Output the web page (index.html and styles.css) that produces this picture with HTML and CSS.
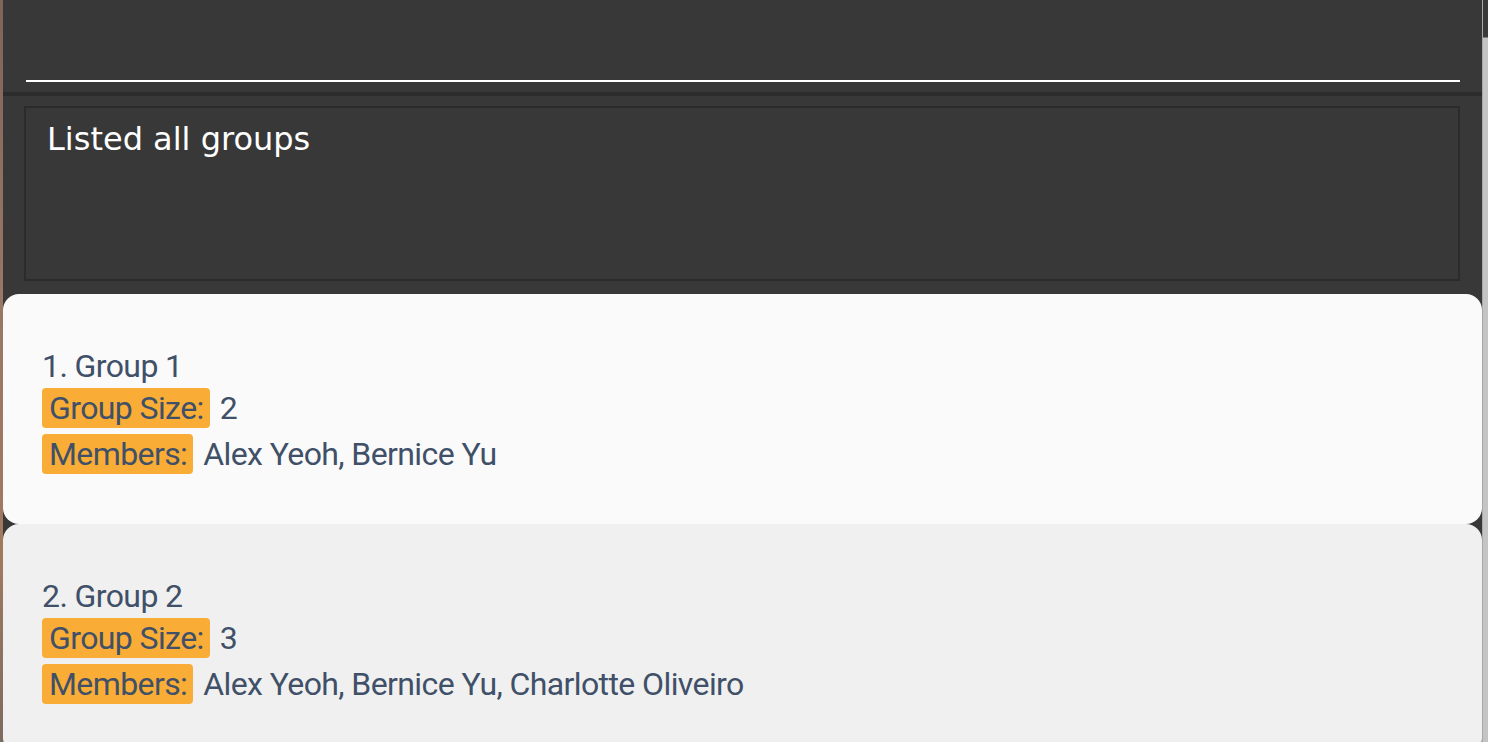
FILE: index.html
```html
<!DOCTYPE html>
<html>
<head>
<meta charset="utf-8">
<link rel="stylesheet" href="styles.css">
</head>
<body>
<div class="window">
  <div class="edge-left"></div>
  <div class="main">
    <div class="command">
      <div class="command-line"></div>
    </div>
    <div class="separator"></div>
    <div class="result-area">
      <div class="result-box">Listed all groups</div>
    </div>
    <div class="list">
      <div class="card card-odd">
        <div class="title">1. Group 1</div>
        <div class="row"><span class="badge">Group Size:</span><span class="value">2</span></div>
        <div class="row"><span class="badge">Members:</span><span class="value">Alex Yeoh, Bernice Yu</span></div>
      </div>
      <div class="card card-even">
        <div class="title">2. Group 2</div>
        <div class="row"><span class="badge">Group Size:</span><span class="value">3</span></div>
        <div class="row"><span class="badge">Members:</span><span class="value">Alex Yeoh, Bernice Yu, Charlotte Oliveiro</span></div>
      </div>
    </div>
  </div>
  <div class="edge-right"></div>
</div>
</body>
</html>
```

FILE: styles.css
```css
html, body {
  margin: 0;
  padding: 0;
  background: #383838;
  overflow: hidden;
}
.window {
  display: flex;
  width: 1488px;
  height: 742px;
  overflow: hidden;
}
.edge-left {
  width: 3px;
  flex: none;
  background: linear-gradient(to bottom, #7f6458 0%, #9a7766 40%, #a07a5e 75%, #7d6a60 100%);
}
.edge-right {
  width: 6px;
  flex: none;
  background: linear-gradient(to bottom, #3a3a3a 0px, #3a3a3a 37px, #c4c4c4 38px, #c4c4c4 100%);
  border-left: 1px solid #a8a8a8;
  box-sizing: border-box;
}
.main {
  flex: 1;
  display: flex;
  flex-direction: column;
  background: #383838;
  min-width: 0;
}
.main > * {
  flex: none;
}
.command {
  height: 92px;
  padding: 80px 22px 0 23px;
  box-sizing: border-box;
}
.command-line {
  height: 2px;
  background: #ffffff;
}
.separator {
  height: 4px;
  background: #2c2c2c;
}
.result-area {
  padding: 10px 22px 13px 21px;
}
.result-box {
  border: 2px solid #2b2b2b;
  padding: 13px 20px 0 21px;
  font-family: "DejaVu Sans", sans-serif;
  font-size: 32px;
  color: #ffffff;
  line-height: 37px;
  height: 158px;
}
.list {
  display: flex;
  flex-direction: column;
}
.card {
  flex: none;
  border-radius: 16px;
  padding: 51px 20px 50px 39px;
  font-family: Roboto, sans-serif;
  font-size: 32px;
  color: #3f5068;
  letter-spacing: -0.6px;
}
.card-odd { background: #fafafa; }
.card-even { background: #f0f0f0; }
.title {
  line-height: 43px;
  height: 43px;
}
.row {
  display: flex;
  align-items: center;
  height: 40px;
  margin-bottom: 6px;
}
.row:last-child { margin-bottom: 0; }
.badge {
  background: #f9ad36;
  border-radius: 4px;
  line-height: 40px;
  height: 40px;
  padding: 0 6px 0 7px;
}
.value {
  margin-left: 10px;
  line-height: 40px;
}
```
